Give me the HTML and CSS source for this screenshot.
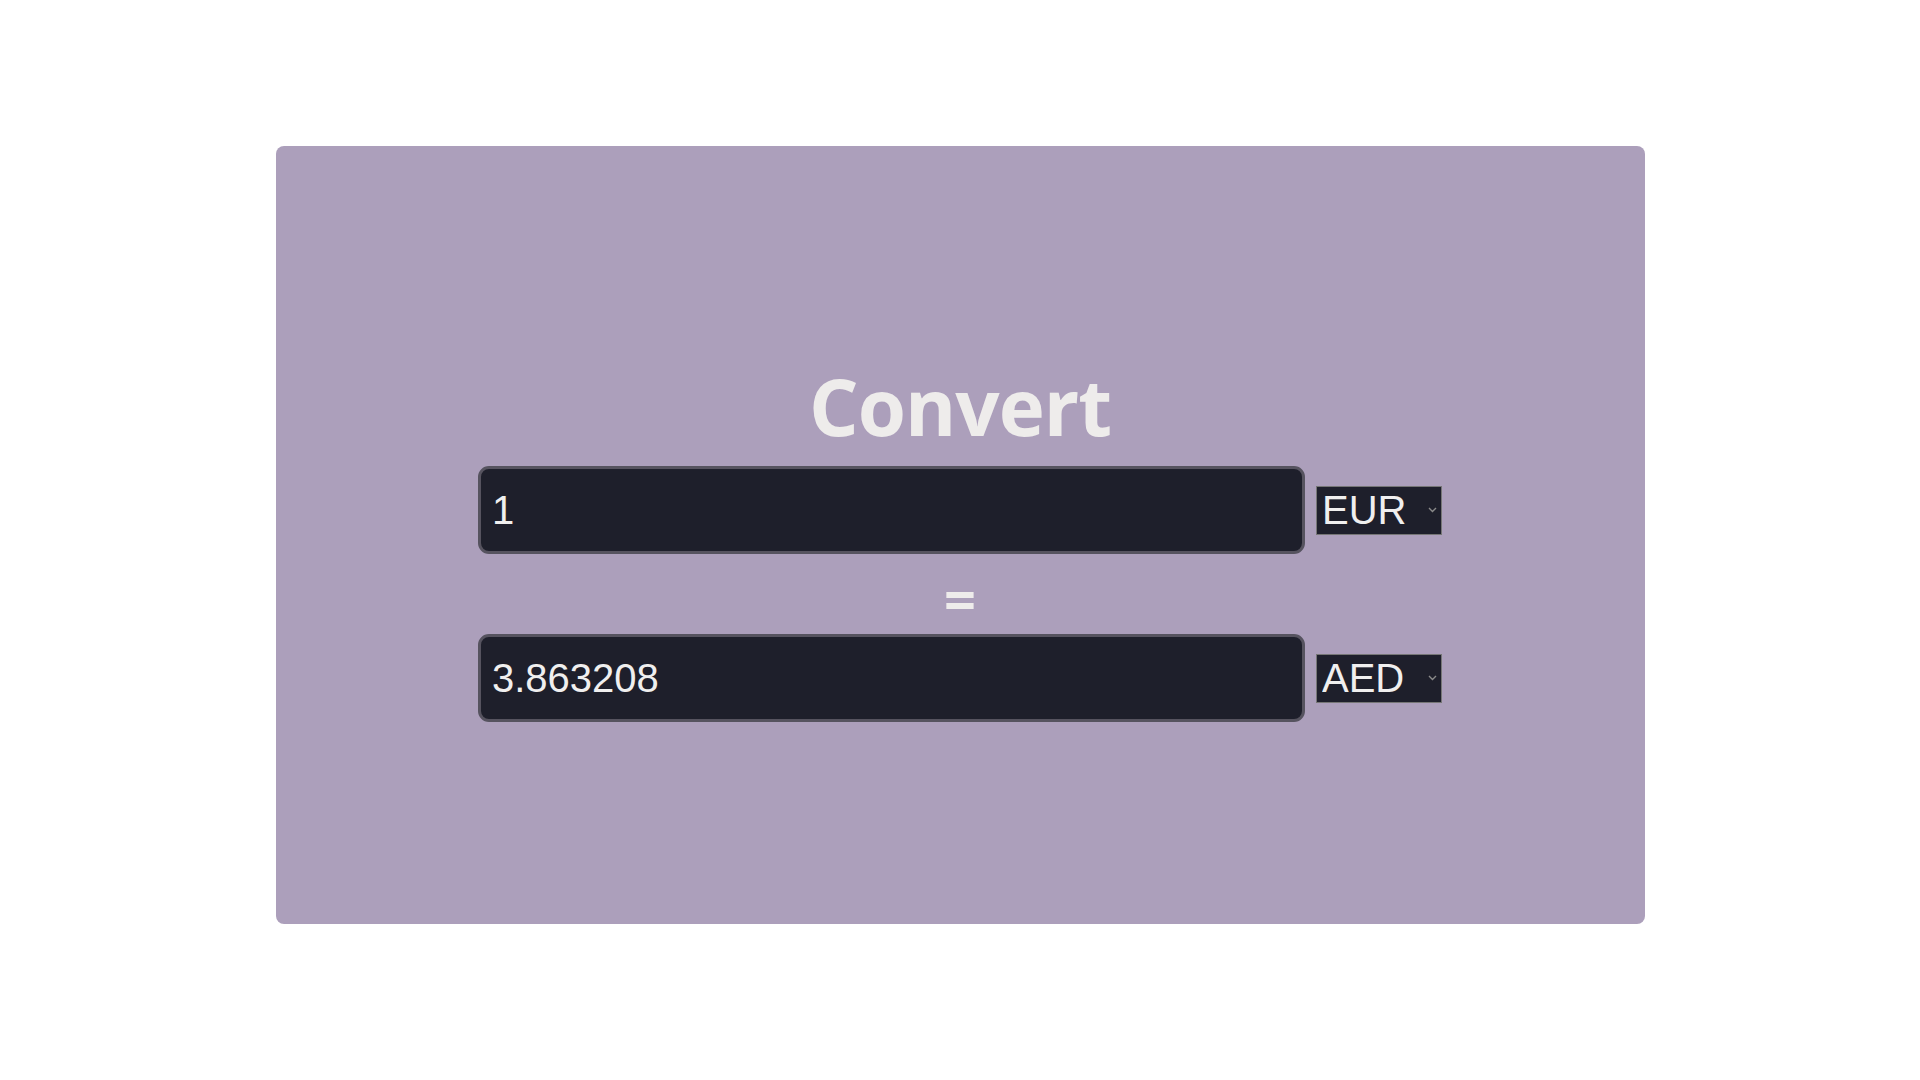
FILE: index.html
```html
<!DOCTYPE html>
<html lang="en">
<head>
<meta charset="utf-8">
<title>Convert</title>
<link rel="stylesheet" href="styles.css">
</head>
<body>
<main class="card">
  <h1 class="title">Convert</h1>
  <div class="row">
    <input class="amount" type="text" value="1">
    <div class="picker">
      <select class="currency"><option>EUR</option></select>
      <svg class="chev" width="9" height="6" viewBox="0 0 9 6"><path d="M1 1l3.5 3.5L8 1" fill="none" stroke="#8a8a8a" stroke-width="1.4"/></svg>
    </div>
  </div>
  <div class="equals">=</div>
  <div class="row">
    <input class="amount" type="text" value="3.863208">
    <div class="picker">
      <select class="currency"><option>AED</option></select>
      <svg class="chev" width="9" height="6" viewBox="0 0 9 6"><path d="M1 1l3.5 3.5L8 1" fill="none" stroke="#8a8a8a" stroke-width="1.4"/></svg>
    </div>
  </div>
</main>
</body>
</html>
```
FILE: styles.css
```css
html, body {
  margin: 0;
  padding: 0;
  background: #ffffff;
}

.card {
  box-sizing: border-box;
  width: 1369px;
  height: 778px;
  margin: 146px auto 0;
  background: #ac9fbb;
  border-radius: 8px;
  display: flex;
  flex-direction: column;
  align-items: center;
  padding-top: 210px;
}

.title {
  margin: 0;
  font-family: "Open Sans", "Noto Sans", sans-serif;
  font-weight: 700;
  font-size: 78px;
  line-height: 100px;
  color: #eeeceb;
  letter-spacing: -1px;
}

.row {
  display: flex;
  align-items: center;
  gap: 11px;
  margin-top: 10px;
}

.equals + .row {
  margin-top: 16px;
}

.amount {
  box-sizing: border-box;
  width: 827px;
  height: 88px;
  border: 3px solid #56535f;
  border-radius: 11px;
  background: #1e1f2b;
  color: #f0efef;
  font-family: "Liberation Sans", Arial, sans-serif;
  font-size: 40px;
  padding: 0 11px;
  outline: none;
}

.picker {
  position: relative;
  width: 126px;
  height: 49px;
}

.currency {
  box-sizing: border-box;
  width: 126px;
  height: 49px;
  appearance: none;
  -webkit-appearance: none;
  border: 1px solid #767676;
  border-radius: 0;
  background: #1e1f2b;
  color: #f0efef;
  font-family: "Liberation Sans", Arial, sans-serif;
  font-size: 40px;
  padding: 0 0 0 5px;
  line-height: 47px;
  outline: none;
}

.chev {
  position: absolute;
  right: 5px;
  top: 21px;
}

.equals {
  font-family: "Open Sans", "Noto Sans", sans-serif;
  font-weight: 700;
  font-size: 56px;
  line-height: 64px;
  color: #eeeceb;
  margin-top: 12px;
  margin-bottom: -12px;
}
```
